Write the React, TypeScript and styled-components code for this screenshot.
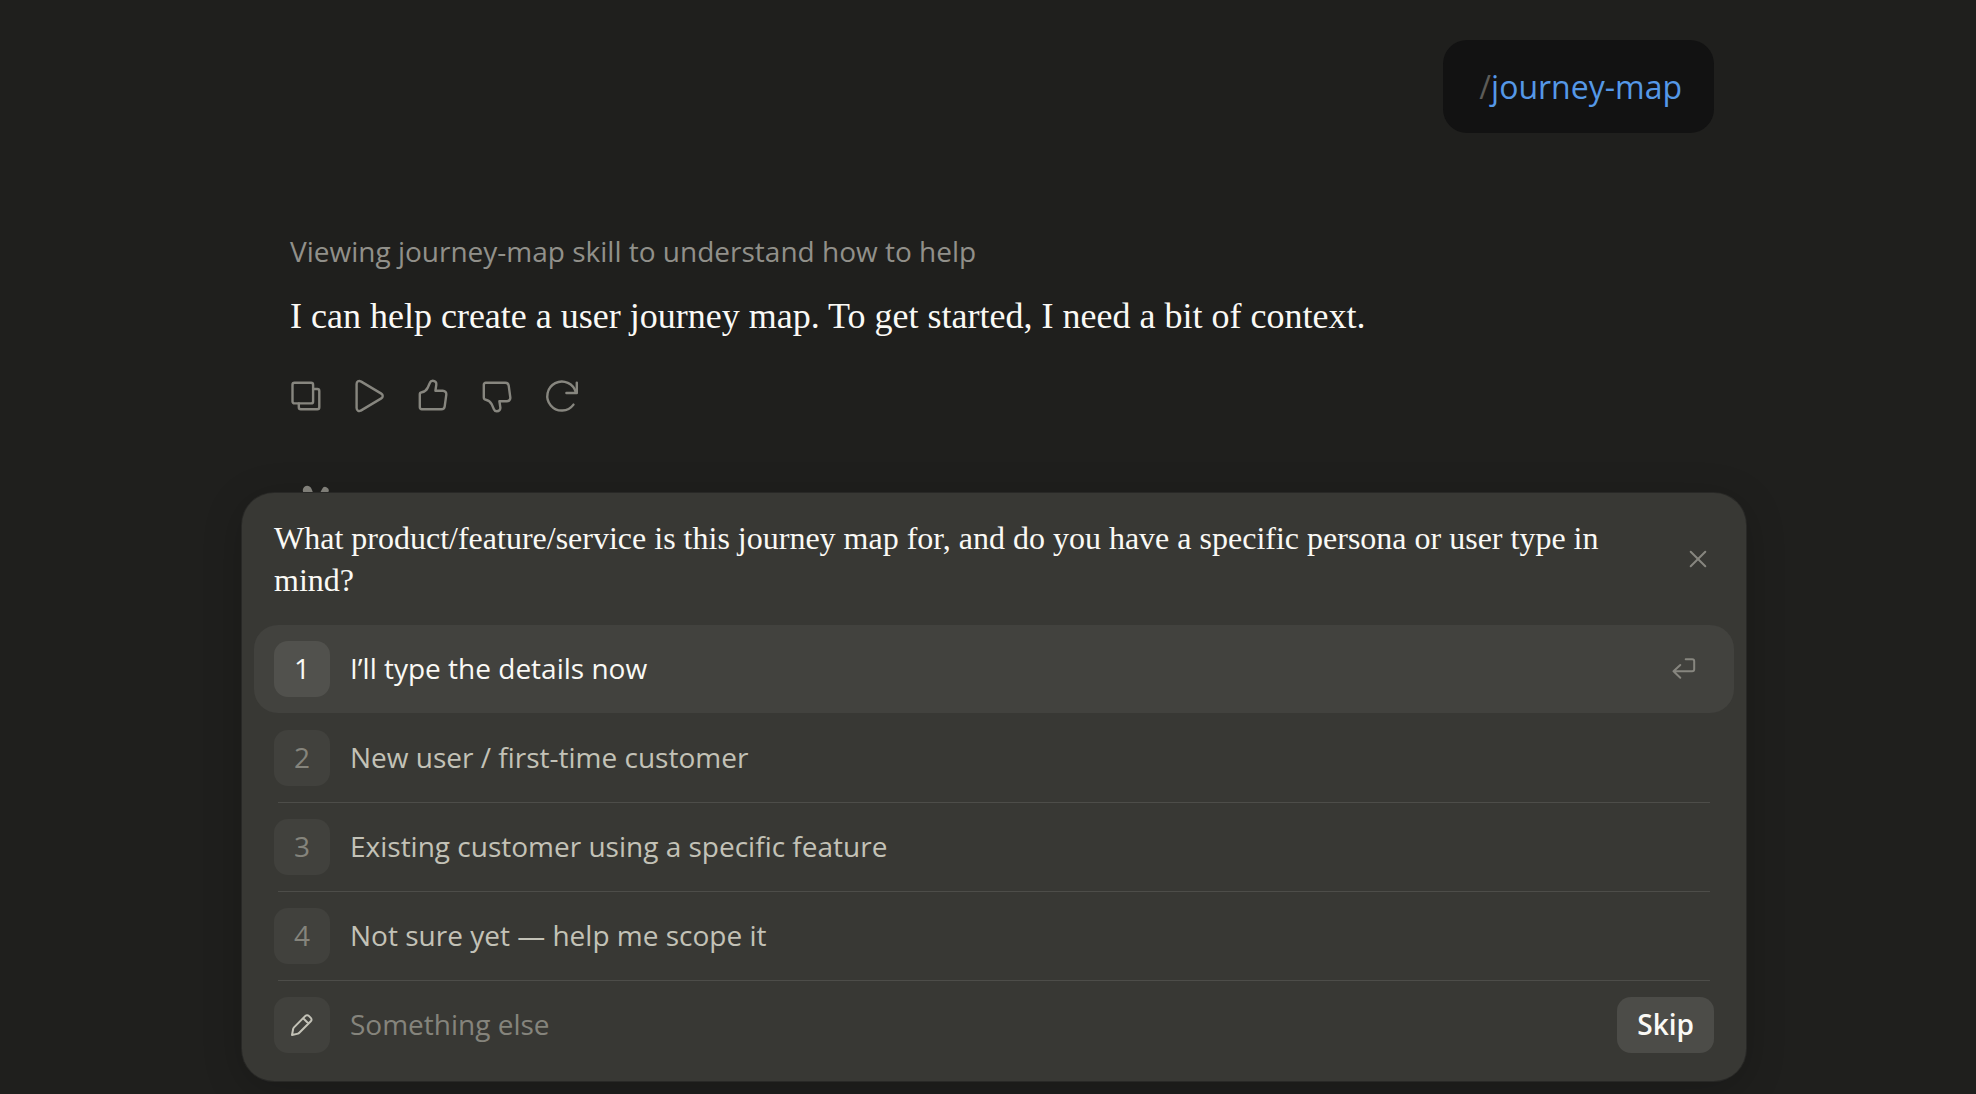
import React, { useState } from 'react';
import styled, { createGlobalStyle } from 'styled-components';

const color = {
  page: '#1f1f1d',
  bubble: '#121212',
  card: '#383834',
  rowActive: '#42423e',
  badge: '#41413d',
  badgeActive: '#51514d',
  skip: '#4c4c48',
  line: '#4d4d49',
  cardEdge: '#282826',
  text: '#faf9f5',
  textSoft: '#c3c2b7',
  textMuted: '#85847c',
  caption: '#91908a',
  icon: '#87867f',
  slash: '#5c5b57',
  link: '#5598e7',
};

const sans = '"Open Sans", "Noto Sans", sans-serif';
const serif = '"Liberation Serif", serif';

const GlobalStyle = createGlobalStyle`
  *, *::before, *::after { box-sizing: border-box; }
  body { margin: 0; background: ${color.page}; color: ${color.text}; font-family: ${sans}; }
  button, input { font: inherit; color: inherit; }
  button { cursor: pointer; }
`;

const Page = styled.main`
  min-height: 100vh;
  display: flex;
  flex-direction: column;
  padding: 40px 12px 13px 24px;
`;

const Thread = styled.section`
  width: 100%;
  max-width: 1504px;
  margin: 0 auto;
  padding: 0 32px 0 48px;
  display: flex;
  flex-direction: column;
`;

const Bubble = styled.div`
  align-self: flex-end;
  padding: 25px 32px 24px 36px;
  border-radius: 24px;
  background: ${color.bubble};
  color: ${color.slash};
  font-size: 32px;
  line-height: 44px;
`;

const Command = styled.span`
  color: ${color.link};
`;

const Caption = styled.p`
  margin: 98px 0 0;
  color: ${color.caption};
  font-size: 28px;
  line-height: 40px;
`;

const Reply = styled.p`
  margin: 21px 0 0;
  font-family: ${serif};
  font-size: 36px;
  line-height: 48px;
`;

const Actions = styled.div`
  display: flex;
  margin: 40px 0 0 -16px;
`;

const IconButton = styled.button<{ $width: number }>`
  display: flex;
  align-items: center;
  justify-content: center;
  flex: none;
  width: ${(p) => p.$width}px;
  height: 32px;
  padding: 0;
  border: 0;
  background: none;
  color: ${color.icon};
`;

const Icon = styled.svg<{ $stroke?: number }>`
  display: block;
  flex: none;
  overflow: visible;
  fill: none;
  stroke: currentColor;
  stroke-width: ${(p) => p.$stroke ?? 2};
  stroke-linecap: round;
  stroke-linejoin: round;
`;

const Ray = styled.path<{ $weight: number }>`
  stroke-width: ${(p) => p.$weight};
`;

const SparkSlot = styled.div`
  height: 9px;
  margin-top: 72px;
  color: ${color.icon};
`;

const Card = styled.section`
  position: relative;
  width: 100%;
  max-width: 1504px;
  margin: 0 auto;
  padding: 24px 12px 12px;
  border-radius: 32px;
  background: ${color.card};
  box-shadow: 0 0 0 1px ${color.cardEdge}, 0 8px 40px rgba(0, 0, 0, 0.2);
`;

const CardHeader = styled.header`
  display: flex;
  align-items: center;
  justify-content: space-between;
  gap: 40px;
  padding: 0 20px 24px;
`;

const Question = styled.h2`
  margin: 0;
  font-family: ${serif};
  font-size: 32px;
  font-weight: 400;
  line-height: 42px;
`;

const Options = styled.ul`
  margin: 0;
  padding: 0;
  list-style: none;
`;

const OptionItem = styled.li<{ $divided: boolean }>`
  &::after {
    content: '';
    display: block;
    height: 1px;
    margin: 0 24px;
    background: ${(p) => (p.$divided ? color.line : 'transparent')};
  }
`;

const Badge = styled.span<{ $active?: boolean }>`
  display: flex;
  align-items: center;
  justify-content: center;
  flex: none;
  width: 56px;
  height: 56px;
  border-radius: 14px;
  background: ${(p) => (p.$active ? color.badgeActive : color.badge)};
  color: ${(p) => (p.$active ? color.text : color.textMuted)};
`;

const NumberBadge = styled(Badge)`
  padding-bottom: 2px;
`;

const PencilBadge = styled(Badge)`
  color: ${color.textSoft};
`;

const OptionButton = styled.button<{ $active: boolean }>`
  display: flex;
  align-items: center;
  gap: 20px;
  width: 100%;
  height: 88px;
  padding: 0 20px;
  border: 0;
  border-radius: 24px;
  background: ${(p) => (p.$active ? color.rowActive : 'transparent')};
  color: ${(p) => (p.$active ? color.text : color.textSoft)};
  font-size: 28px;
  line-height: 40px;
  text-align: left;
`;

const OptionText = styled.span`
  flex: 1;
  padding-bottom: 2px;
`;

const EnterHint = styled.span`
  display: flex;
  justify-content: center;
  width: 60px;
  color: ${color.icon};
`;

const CustomRow = styled.form`
  display: flex;
  align-items: center;
  gap: 20px;
  height: 88px;
  padding: 0 20px;
  font-size: 28px;
  line-height: 40px;
`;

const CustomInput = styled.input`
  flex: 1;
  min-width: 0;
  padding: 0 0 2px;
  border: 0;
  outline: 0;
  background: none;
  color: ${color.text};
  &::placeholder { color: ${color.textMuted}; opacity: 1; }
`;

const SkipButton = styled.button`
  height: 56px;
  padding: 0 20px 2px;
  border: 0;
  border-radius: 14px;
  background: ${color.skip};
  color: ${color.text};
  font-weight: 600;
`;

const thumbPath =
  'M1.8 14.5c0-1.2.8-2 2-2.2 3.2-.6 4.6-2 5.8-4.4l2.3-5.2c.6-1.5 1.6-2 2.8-2 2.4 0 4 1.8 3.6 4.1l-.9 5.9h7.4c2.2 0 3.8 1.8 3.5 4l-1.6 11.6c-.2 1.7-1.6 3-3.4 3H3.8c-1.2 0-2-.9-2-2z';

const actions = [
  {
    label: 'Copy',
    art: (
      <>
        <rect x="2.5" y="2.8" width="20.6" height="20.6" rx="2" />
        <path d="M23.1 9h4.2a2 2 0 0 1 2 2v16.3a2 2 0 0 1-2 2H10.8a2 2 0 0 1-2-2v-3.9" />
      </>
    ),
  },
  {
    label: 'Read aloud',
    art: <path d="M2.6 3.9c0-2.3 2.3-3.7 4.2-2.5l20.5 12.2c1.9 1.1 1.9 3.7 0 4.8L6.8 30.6c-1.9 1.2-4.2-.2-4.2-2.5z" />,
  },
  { label: 'Good response', art: <path d={thumbPath} /> },
  { label: 'Bad response', art: <path d={thumbPath} transform="matrix(1 0 0 -1 0 32)" /> },
  {
    label: 'Retry',
    art: (
      <>
        <path d="M27.5 24.6A14.5 14.5 0 1 1 29.9 12.6" />
        <path d="M30.8 2.6V13H20.4" />
      </>
    ),
  },
];

const options = [
  'I’ll type the details now',
  'New user / first-time customer',
  'Existing customer using a specific feature',
  'Not sure yet — help me scope it',
];

function Spark() {
  return (
    <Icon width="48" height="48" viewBox="0 0 48 48" aria-hidden="true">
      <Ray $weight={9} d="M17.3 6.3L25 26" />
      <Ray $weight={7} d="M35.2 6.5L25 26" />
      <Ray
        $weight={5}
        d="M25 26L42 16M25 26L45 27M25 26L41 38M25 26L32 44M25 26L22 46M25 26L12 41M25 26L5 32M25 26L6 18"
      />
    </Icon>
  );
}

export default function App() {
  const [active, setActive] = useState(0);

  return (
    <Page>
      <GlobalStyle />
      <Thread>
        <Bubble>
          /<Command>journey-map</Command>
        </Bubble>
        <Caption>Viewing journey-map skill to understand how to help</Caption>
        <Reply>I can help create a user journey map. To get started, I need a bit of context.</Reply>
        <Actions>
          {actions.map(({ label, art }) => (
            <IconButton key={label} $width={64} type="button" aria-label={label}>
              <Icon $stroke={2.4} width="32" height="32" viewBox="0 0 32 32" aria-hidden="true">
                {art}
              </Icon>
            </IconButton>
          ))}
        </Actions>
        <SparkSlot>
          <Spark />
        </SparkSlot>
      </Thread>

      <Card aria-labelledby="question">
        <CardHeader>
          <Question id="question">
            What product/feature/service is this journey map for, and do you have a specific persona or user type in
            mind?
          </Question>
          <IconButton $width={32} type="button" aria-label="Close">
            <Icon width="16" height="16" viewBox="0 0 16 16" aria-hidden="true">
              <path d="M.7.7l14.6 14.6M15.3.7L.7 15.3" />
            </Icon>
          </IconButton>
        </CardHeader>

        <Options>
          {options.map((text, i) => (
            <OptionItem key={text} $divided={i !== active}>
              <OptionButton type="button" $active={i === active} onClick={() => setActive(i)}>
                <NumberBadge $active={i === active}>{i + 1}</NumberBadge>
                <OptionText>{text}</OptionText>
                {i === active && (
                  <EnterHint>
                    <Icon width="24" height="24" viewBox="0 0 24 24" aria-hidden="true">
                      <path d="M13.7 2.3h6.5a2 2 0 0 1 2 2v8a2 2 0 0 1-2 2H1.5M8.3 8l-6.8 6.3 6.8 6.4" />
                    </Icon>
                  </EnterHint>
                )}
              </OptionButton>
            </OptionItem>
          ))}
        </Options>

        <CustomRow onSubmit={(e) => e.preventDefault()}>
          <label htmlFor="custom" aria-label="Something else">
            <PencilBadge>
              <Icon width="24" height="24" viewBox="0 0 24 24" aria-hidden="true">
                <path d="M2 22l1.2-6.2c.1-.5.4-1 .8-1.4L15.4 2.9c1-1 2.4-1 3.4 0l2 2c1 1 1 2.5 0 3.4L9.3 19.8c-.4.4-.8.7-1.3.8zM13.2 5.3l5 5" />
              </Icon>
            </PencilBadge>
          </label>
          <CustomInput id="custom" type="text" placeholder="Something else" />
          <SkipButton type="button">Skip</SkipButton>
        </CustomRow>
      </Card>
    </Page>
  );
}
